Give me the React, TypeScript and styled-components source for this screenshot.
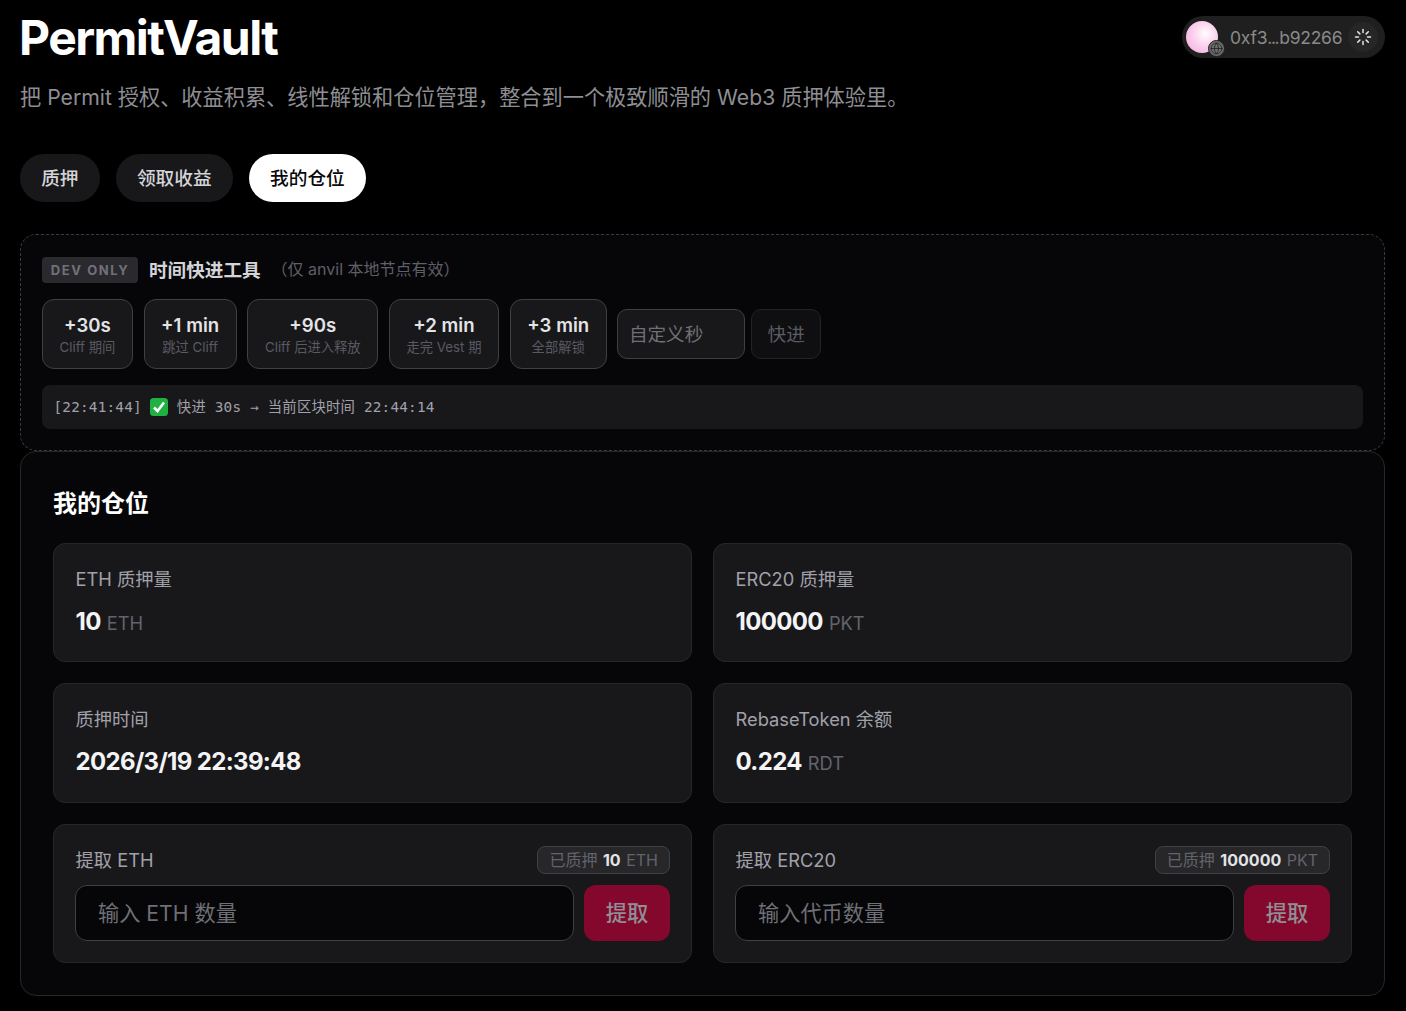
import React from 'react';
import styled, {createGlobalStyle} from 'styled-components';
import {Globe, Loader} from 'lucide-react';

const sans = `Inter, "Noto Sans CJK SC", sans-serif`;
const mono = `"DejaVu Sans Mono", "Noto Sans CJK SC", monospace`;

const GlobalStyle = createGlobalStyle`
  html, body {
    margin: 0;
    background: #000;
  }
  * {
    box-sizing: border-box;
  }
  body {
    font-family: ${sans};
    color: #fff;
  }
`;

const Page = styled.div`
  width: 1406px;
  height: 1011px;
  padding: 0 21px 0 20px;
  overflow: hidden;
`;

const Header = styled.header`
  display: flex;
  justify-content: space-between;
  align-items: flex-start;
  padding-top: 16px;
`;

const Title = styled.h1`
  margin: 0 0 0 -1px;
  font-size: 48px;
  line-height: 43px;
  font-weight: 700;
  letter-spacing: -1.55px;
`;

const Wallet = styled.div`
  display: flex;
  align-items: center;
  height: 42px;
  width: 203px;
  padding: 0 4px;
  background: #1f1f1f;
  border-radius: 21px;
`;

const Avatar = styled.div`
  position: relative;
  width: 32px;
  height: 32px;
  border-radius: 50%;
  background: radial-gradient(circle at 60% 40%, #fff 0%, #fbd5ee 40%, #f6a6de 100%);
`;

const AvatarBadge = styled.span`
  position: absolute;
  right: -7px;
  bottom: -4px;
  width: 17px;
  height: 17px;
  border-radius: 50%;
  background: #6e6e6e;
  border: 1px solid #1f1f1f;
  display: flex;
  align-items: center;
  justify-content: center;
  color: #222;
`;

const Address = styled.span`
  margin-left: 12px;
  font-size: 17.5px;
  letter-spacing: -0.25px;
  color: #8a8a8a;
  white-space: nowrap;
`;

const Dots = styled.span`
  letter-spacing: -1.4px;
  margin-right: 1px;
`;

const Spin = styled.span`
  margin-left: auto;
  width: 30px;
  height: 30px;
  margin-right: 3px;
  border-radius: 50%;
  background: #262626;
  display: flex;
  align-items: center;
  justify-content: center;
  color: #e4e4e4;
`;

const Subtitle = styled.p`
  margin: 22px 0 0;
  font-size: 21.2px;
  line-height: 32px;
  color: #8e8e93;
`;

const Tabs = styled.nav`
  display: flex;
  gap: 16px;
  margin-top: 41px;
`;

const Tab = styled.button<{$active?: boolean}>`
  height: 48px;
  padding: 0 21.2px 3px;
  border: 0;
  border-radius: 24px;
  font-family: ${sans};
  font-size: 18.7px;
  font-weight: 500;
  background: ${p => (p.$active ? '#fff' : '#18181a')};
  color: ${p => (p.$active ? '#09090b' : '#d4d4d8')};
`;

const DevPanel = styled.section`
  margin-top: 32px;
  height: 217px;
  padding: 22px 21px 0;
  background: #060608;
  border: 1px dashed #3a3a40;
  border-radius: 16px;
`;

const DevHead = styled.div`
  display: flex;
  align-items: center;
  height: 26px;
`;

const DevTag = styled.span`
  height: 26px;
  width: 96px;
  display: flex;
  align-items: center;
  justify-content: center;
  background: #2a2a2e;
  border-radius: 4px;
  font-size: 13px;
  font-weight: 700;
  letter-spacing: 1.6px;
  color: #71717a;
`;

const DevTitle = styled.span`
  margin: 0 0 4px 11px;
  font-size: 18.6px;
  font-weight: 600;
  color: #d4d4d8;
`;

const DevNote = styled.span`
  margin: 0 0 4px 11px;
  font-size: 16px;
  color: #5f5f67;
`;

const SkipRow = styled.div`
  display: flex;
  align-items: center;
  gap: 10.8px;
  margin-top: 16px;
`;

const SkipButton = styled.button`
  height: 70px;
  padding: 1px 16.5px 0;
  display: flex;
  flex-direction: column;
  align-items: center;
  justify-content: center;
  gap: 2px;
  background: #18181b;
  border: 1px solid #3f3f46;
  border-radius: 12px;
  font-family: ${sans};
`;

const SkipLabel = styled.span`
  font-size: 18.6px;
  line-height: 24px;
  font-weight: 600;
  color: #e4e4e7;
  white-space: nowrap;
`;

const SkipHint = styled.span`
  font-size: 13.3px;
  line-height: 17px;
  color: #5a5a62;
  white-space: nowrap;
`;

const CustomField = styled.input`
  width: 128px;
  height: 50px;
  padding: 0 10.5px;
  background: #18181b;
  border: 1px solid #3f3f46;
  border-radius: 10px;
  font-family: ${sans};
  font-size: 18.6px;
  color: #fff;
  &::placeholder {
    color: #6f6f75;
  }
`;

const GoButton = styled.button`
  width: 70px;
  height: 50px;
  margin-left: -5px;
  padding: 0 0 3px;
  background: #0f0f11;
  border: 1px solid #232327;
  border-radius: 10px;
  font-family: ${sans};
  font-size: 18.6px;
  color: #5c5c62;
`;

const LogLine = styled.div`
  height: 44px;
  line-height: 44px;
  margin-top: 16px;
  padding: 0 11.5px;
  background: #18181b;
  border-radius: 8px;
  font-family: ${mono};
  font-size: 14.35px;
  letter-spacing: 0.2px;
  color: #a1a1aa;
  white-space: pre;
`;

const CheckMark = styled.svg`
  margin: 0 9px 0 8px;
  vertical-align: -4px;
`;

const PositionCard = styled.section`
  height: 545px;
  padding: 32px;
  background: #060608;
  border: 1px solid #27272a;
  border-radius: 16px;
`;

const CardTitle = styled.h2`
  margin: 0;
  font-size: 24px;
  line-height: 40px;
  font-weight: 700;
`;

const StatGrid = styled.div`
  display: grid;
  grid-template-columns: 639px 639px;
  grid-template-rows: 119px 120px 139px;
  gap: 21px;
  margin-top: 19px;
`;

const Stat = styled.div`
  padding: 21px 21px 0;
  background: #18181b;
  border: 1px solid #27272a;
  border-radius: 12px;
`;

const StatLabel = styled.div`
  padding-left: 0.5px;
  font-size: 18.3px;
  line-height: 28px;
  color: #a1a1aa;
`;

const StatValue = styled.div`
  margin-top: 13px;
  padding-left: 0.5px;
  font-size: 24px;
  line-height: 32px;
  font-weight: 700;
  letter-spacing: -0.65px;
  color: #f4f4f5;
`;

const Unit = styled.span`
  margin-left: 6px;
  font-size: 18.3px;
  font-weight: 400;
  letter-spacing: 0;
  color: #63636b;
`;

const WithdrawHead = styled.div`
  display: flex;
  justify-content: space-between;
  align-items: center;
  height: 28px;
`;

const Staked = styled.span`
  display: block;
  height: 28px;
  line-height: 26px;
  padding: 0 11px;
  background: #27272a;
  border: 1px solid #3f3f46;
  border-radius: 8px;
  font-size: 16px;
  word-spacing: 1px;
  color: #63636b;
  white-space: pre;
`;

const StakedAmount = styled.b`
  font-weight: 700;
  color: #e4e4e7;
`;

const WithdrawRow = styled.div`
  display: flex;
  gap: 10px;
  margin-top: 11px;
`;

const AmountField = styled.input`
  flex: 1;
  min-width: 0;
  height: 56px;
  padding: 0 22px;
  background: #060608;
  border: 1px solid #3f3f46;
  border-radius: 12px;
  font-family: ${sans};
  font-size: 21.2px;
  color: #fff;
  &::placeholder {
    color: #6f6f75;
  }
`;

const WithdrawButton = styled.button`
  width: 86px;
  height: 56px;
  padding: 0 0 4px;
  border: 0;
  border-radius: 12px;
  background: #84082e;
  font-family: ${sans};
  font-size: 21.3px;
  font-weight: 500;
  color: #8f8f95;
`;

const skips = [
  {label: '+30s', hint: 'Cliff 期间'},
  {label: '+1 min', hint: '跳过 Cliff'},
  {label: '+90s', hint: 'Cliff 后进入释放'},
  {label: '+2 min', hint: '走完 Vest 期'},
  {label: '+3 min', hint: '全部解锁'},
];

const withdraws = [
  {title: '提取 ETH', amount: '10', unit: 'ETH', placeholder: '输入 ETH 数量'},
  {title: '提取 ERC20', amount: '100000', unit: 'PKT', placeholder: '输入代币数量'},
];

function App() {
  return (
    <Page>
      <GlobalStyle/>
      <Header>
        <Title>PermitVault</Title>
        <Wallet>
          <Avatar>
            <AvatarBadge><Globe size={13} strokeWidth={1.5}/></AvatarBadge>
          </Avatar>
          <Address>0xf3<Dots>...</Dots>b92266</Address>
          <Spin><Loader size={18} strokeWidth={2}/></Spin>
        </Wallet>
      </Header>
      <Subtitle>把 Permit 授权、收益积累、线性解锁和仓位管理，整合到一个极致顺滑的 Web3 质押体验里。</Subtitle>
      <Tabs>
        <Tab>质押</Tab>
        <Tab>领取收益</Tab>
        <Tab $active>我的仓位</Tab>
      </Tabs>

      <DevPanel>
        <DevHead>
          <DevTag>DEV ONLY</DevTag>
          <DevTitle>时间快进工具</DevTitle>
          <DevNote>（仅 anvil 本地节点有效）</DevNote>
        </DevHead>
        <SkipRow>
          {skips.map(s => (
            <SkipButton key={s.label}>
              <SkipLabel>{s.label}</SkipLabel>
              <SkipHint>{s.hint}</SkipHint>
            </SkipButton>
          ))}
          <CustomField placeholder="自定义秒"/>
          <GoButton>快进</GoButton>
        </SkipRow>
        <LogLine>
          [22:41:44]
          <CheckMark width="18" height="18" viewBox="0 0 18 18">
            <rect x="0" y="0" width="18" height="18" rx="3.5" fill="#1fb141"/>
            <path d="M4 9.5l3.5 3.5L14 4.5" fill="none" stroke="#fff" strokeWidth="2.6"/>
          </CheckMark>
          快进 30s → 当前区块时间 22:44:14
        </LogLine>
      </DevPanel>

      <PositionCard>
        <CardTitle>我的仓位</CardTitle>
        <StatGrid>
          <Stat>
            <StatLabel>ETH 质押量</StatLabel>
            <StatValue>10<Unit>ETH</Unit></StatValue>
          </Stat>
          <Stat>
            <StatLabel>ERC20 质押量</StatLabel>
            <StatValue>100000<Unit>PKT</Unit></StatValue>
          </Stat>
          <Stat>
            <StatLabel>质押时间</StatLabel>
            <StatValue>2026/3/19 22:39:48</StatValue>
          </Stat>
          <Stat>
            <StatLabel>RebaseToken 余额</StatLabel>
            <StatValue>0.224<Unit>RDT</Unit></StatValue>
          </Stat>
          {withdraws.map(w => (
            <Stat key={w.title}>
              <WithdrawHead>
                <StatLabel>{w.title}</StatLabel>
                <Staked>已质押 <StakedAmount>{w.amount}</StakedAmount> {w.unit}</Staked>
              </WithdrawHead>
              <WithdrawRow>
                <AmountField placeholder={w.placeholder}/>
                <WithdrawButton>提取</WithdrawButton>
              </WithdrawRow>
            </Stat>
          ))}
        </StatGrid>
      </PositionCard>
    </Page>
  );
}
export default App;
